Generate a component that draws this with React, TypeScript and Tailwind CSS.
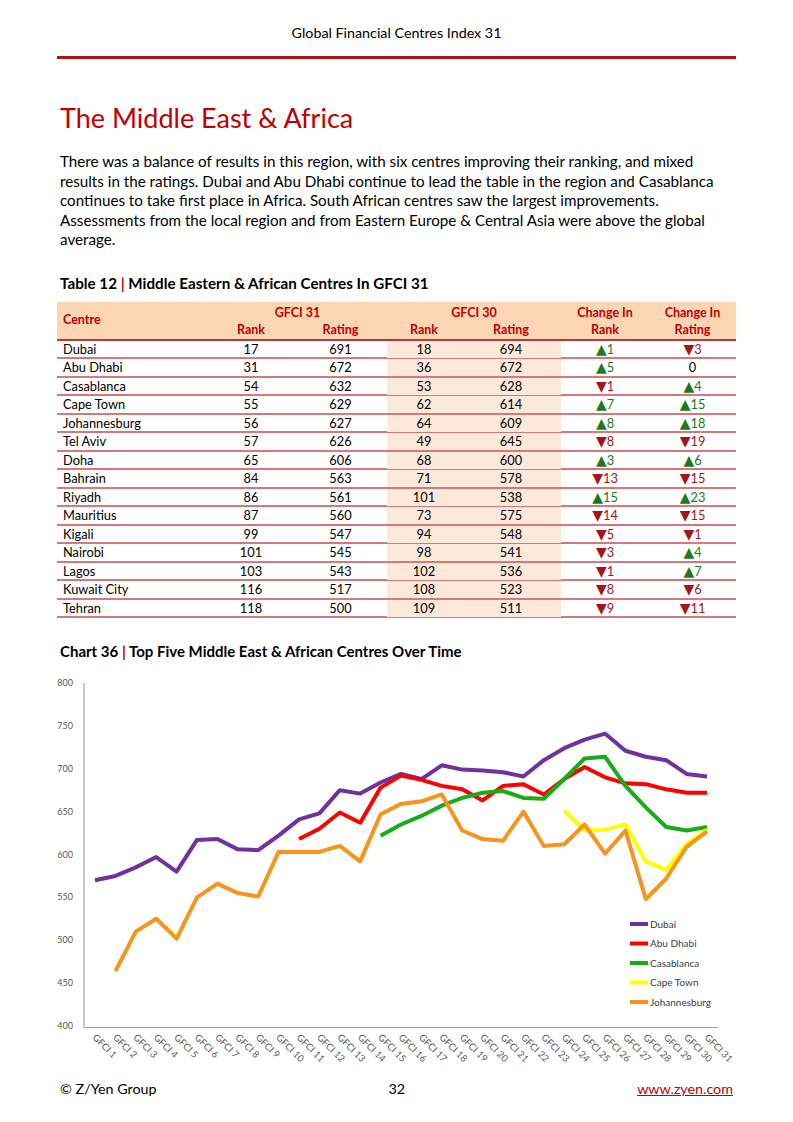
import React from 'react';

type Row = {
  centre: string;
  rank31: number;
  rating31: number;
  rank30: number;
  rating30: number;
  chgRank: number;
  chgRating: number;
};

const rows: Row[] = [
  { centre: 'Dubai', rank31: 17, rating31: 691, rank30: 18, rating30: 694, chgRank: 1, chgRating: -3 },
  { centre: 'Abu Dhabi', rank31: 31, rating31: 672, rank30: 36, rating30: 672, chgRank: 5, chgRating: 0 },
  { centre: 'Casablanca', rank31: 54, rating31: 632, rank30: 53, rating30: 628, chgRank: -1, chgRating: 4 },
  { centre: 'Cape Town', rank31: 55, rating31: 629, rank30: 62, rating30: 614, chgRank: 7, chgRating: 15 },
  { centre: 'Johannesburg', rank31: 56, rating31: 627, rank30: 64, rating30: 609, chgRank: 8, chgRating: 18 },
  { centre: 'Tel Aviv', rank31: 57, rating31: 626, rank30: 49, rating30: 645, chgRank: -8, chgRating: -19 },
  { centre: 'Doha', rank31: 65, rating31: 606, rank30: 68, rating30: 600, chgRank: 3, chgRating: 6 },
  { centre: 'Bahrain', rank31: 84, rating31: 563, rank30: 71, rating30: 578, chgRank: -13, chgRating: -15 },
  { centre: 'Riyadh', rank31: 86, rating31: 561, rank30: 101, rating30: 538, chgRank: 15, chgRating: 23 },
  { centre: 'Mauritius', rank31: 87, rating31: 560, rank30: 73, rating30: 575, chgRank: -14, chgRating: -15 },
  { centre: 'Kigali', rank31: 99, rating31: 547, rank30: 94, rating30: 548, chgRank: -5, chgRating: -1 },
  { centre: 'Nairobi', rank31: 101, rating31: 545, rank30: 98, rating30: 541, chgRank: -3, chgRating: 4 },
  { centre: 'Lagos', rank31: 103, rating31: 543, rank30: 102, rating30: 536, chgRank: -1, chgRating: 7 },
  { centre: 'Kuwait City', rank31: 116, rating31: 517, rank30: 108, rating30: 523, chgRank: -8, chgRating: -6 },
  { centre: 'Tehran', rank31: 118, rating31: 500, rank30: 109, rating30: 511, chgRank: -9, chgRating: -11 }
];

const N = null;

// ratings read off the chart, GFCI 1 .. GFCI 31
const series = [
  {
    name: 'Dubai',
    color: '#7030a0',
    values: [570, 575, 585, 597, 580, 617, 618, 606, 605, 622, 641, 648, 675, 671, 684, 694, 688, 704, 699, 698, 696, 691, 710, 724, 734, 741, 721, 714, 710, 694, 691]
  },
  {
    name: 'Abu Dhabi',
    color: '#ff0000',
    values: [N, N, N, N, N, N, N, N, N, N, 618, 630, 649, 637, 678, 692, 687, 680, 676, 663, 680, 682, 670, 688, 702, 690, 683, 682, 676, 672, 672]
  },
  {
    name: 'Casablanca',
    color: '#1aab1a',
    values: [N, N, N, N, N, N, N, N, N, N, N, N, N, N, 622, 635, 645, 657, 666, 672, 674, 666, 665, 688, 712, 714, 680, 655, 632, 628, 632]
  },
  {
    name: 'Cape Town',
    color: '#ffff00',
    values: [N, N, N, N, N, N, N, N, N, N, N, N, N, N, N, N, N, N, N, N, N, N, N, 651, 628, 629, 635, 592, 582, 612, 629]
  },
  {
    name: 'Johannesburg',
    color: '#f7941d',
    values: [N, 464, 510, 525, 502, 550, 566, 555, 551, 603, 603, 603, 610, 592, 647, 659, 662, 670, 628, 618, 616, 650, 610, 612, 635, 601, 628, 548, 572, 609, 627]
  }
];

const px = (i: number) => 45 + i * 20.4;
const py = (v: number) => 11 + (800 - v) * 0.8575;

function Change({ value }: { value: number }) {
  if (value === 0) return <span>0</span>;
  const up = value > 0;
  return (
    <span className={up ? 'text-[#1d7a1d]' : 'text-[#a3141c]'}>
      <span className="text-[14px] leading-[12px] font-['DejaVu_Sans',sans-serif]">{up ? '▲' : '▼'}</span>
      {Math.abs(value)}
    </span>
  );
}

function Chart() {
  const ticks = [800, 750, 700, 650, 600, 550, 500, 450, 400];
  return (
    <svg width="690" height="400" className="block">
      {ticks.map((t) => (
        <text key={t} x="23" y={py(t) + 3} textAnchor="end" fontSize="9" fill="#595959" fontFamily="Lato, sans-serif">
          {t}
        </text>
      ))}
      <line x1="34" y1={py(800)} x2="34" y2="355.5" stroke="#a6a6a6" strokeWidth="1.2" />
      <line x1="34" y1="355.5" x2="668" y2="355.5" stroke="#a6a6a6" strokeWidth="1.2" />
      {Array.from({ length: 31 }, (_, i) => (
        <text
          key={i}
          x={px(i) - 3}
          y={366}
          fontSize="9.5"
          fill="#595959"
          fontFamily="Lato, sans-serif"
          transform={`rotate(45 ${px(i) - 3} 366)`}
        >
          GFCI {i + 1}
        </text>
      ))}
      {series.map((s) => {
        const pts = s.values
          .map((v, i) => (v === null ? null : `${px(i)},${py(v)}`))
          .filter(Boolean)
          .join(' ');
        return (
          <polyline key={s.name} points={pts} fill="none" stroke={s.color} strokeWidth="4" strokeLinejoin="round" />
        );
      })}
      {series.map((s, i) => (
        <g key={s.name}>
          <line x1="580" x2="598" y1={252 + i * 19.5} y2={252 + i * 19.5} stroke={s.color} strokeWidth="4" />
          <text x="600" y={255.5 + i * 19.5} fontSize="10" fill="#404040" fontFamily="Lato, sans-serif">
            {s.name}
          </text>
        </g>
      ))}
    </svg>
  );
}

const cols = 'grid grid-cols-[151px_86px_93px_74px_100px_88px_87px]';

export default function App() {
  return (
    <div className="w-[793px] h-[1122px] bg-white text-black font-['Lato','DejaVu_Sans',sans-serif] flex flex-col">
      <div className="pt-[24px] text-center text-[14.3px] leading-[18px]">Global Financial Centres Index 31</div>
      <div className="mx-[57px] mt-[14px] h-[3px] bg-[#b01019]" />

      <div className="px-[60px]">
        <h1 className="mt-[41px] text-[27px] leading-[36px] text-[#c00000]">The Middle East &amp; Africa</h1>

        <p className="mt-[16px] text-[15.2px] leading-[19.5px] whitespace-nowrap">
          <span className="block">There was a balance of results in this region, with six centres improving their ranking, and mixed</span>
          <span className="block">results in the ratings. Dubai and Abu Dhabi continue to lead the table in the region and Casablanca</span>
          <span className="block">continues to take first place in Africa. South African centres saw the largest improvements.</span>
          <span className="block">Assessments from the local region and from Eastern Europe &amp; Central Asia were above the global</span>
          <span className="block">average.</span>
        </p>

        <div className="mt-[24px] text-[15.2px] font-bold leading-[18px]">
          Table 12 <span className="text-[#c00000]">|</span> Middle Eastern &amp; African Centres In GFCI 31
        </div>
      </div>

      <div className="mx-[57px] mt-[10px] text-[12.8px]">
        <div className={`${cols} bg-[#fcd5b4] text-[#c00000] font-bold text-[12.5px] border-b-2 border-[#b8383d]`}>
          <div className="row-span-2 flex items-center pl-[6px]">Centre</div>
          <div className="col-span-2 text-center h-[19px] leading-[21px]">GFCI 31</div>
          <div className="col-span-2 text-center h-[19px] leading-[21px]">GFCI 30</div>
          <div className="text-center h-[19px] leading-[21px]">Change In</div>
          <div className="text-center h-[19px] leading-[21px]">Change In</div>
          <div className="text-center h-[18px] leading-[18px]">Rank</div>
          <div className="text-center h-[18px] leading-[18px]">Rating</div>
          <div className="text-center h-[18px] leading-[18px]">Rank</div>
          <div className="text-center h-[18px] leading-[18px]">Rating</div>
          <div className="text-center h-[18px] leading-[18px]">Rank</div>
          <div className="text-center h-[18px] leading-[18px]">Rating</div>
        </div>
        {rows.map((r) => (
          <div key={r.centre} className={`${cols} h-[18.5px] leading-[17px] border-b-2 border-[#d47a7c]`}>
            <div className="pl-[6px]">{r.centre}</div>
            <div className="text-center">{r.rank31}</div>
            <div className="text-center">{r.rating31}</div>
            <div className="text-center bg-[#fde9d9]">{r.rank30}</div>
            <div className="text-center bg-[#fde9d9]">{r.rating30}</div>
            <div className="text-center">
              <Change value={r.chgRank} />
            </div>
            <div className="text-center">
              <Change value={r.chgRating} />
            </div>
          </div>
        ))}
      </div>

      <div className="px-[60px] mt-[24px] text-[15px] font-bold leading-[18px]">
        Chart 36 <span className="text-[#c00000]">|</span> Top Five Middle East &amp; African Centres Over Time
      </div>

      <div className="pl-[50px] mt-[12px]">
        <Chart />
      </div>

      <div className="mt-auto mb-[24px] mx-[60px] flex justify-between text-[14.3px] leading-[18px]">
        <span>© Z/Yen Group</span>
        <span>32</span>
        <span className="text-[#c00000] underline">www.zyen.com</span>
      </div>
    </div>
  );
}
